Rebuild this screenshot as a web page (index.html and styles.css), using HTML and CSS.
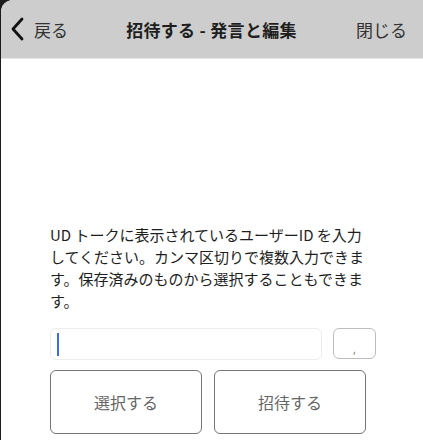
FILE: index.html
```html
<!DOCTYPE html>
<html lang="ja">
<head>
    <meta charset="UTF-8">
    <meta name="viewport" content="width=device-width, initial-scale=1.0">
    <title>招待する - 発言と編集</title>
    <link rel="stylesheet" href="styles.css">
</head>
<body>
    <div class="sheet">
        <div class="nav-bar">
            <a class="nav-back">
                <svg class="chevron" width="14" height="24" viewBox="0 0 14 24">
                    <polyline points="12,2 3,12 12,22" fill="none" stroke="#111" stroke-width="2.8" stroke-linecap="round" stroke-linejoin="round"/>
                </svg>
                <span>戻る</span>
            </a>
            <div class="nav-title">招待する - 発言と編集</div>
            <a class="nav-close">閉じる</a>
        </div>

        <div class="content">
            <p class="guide">UD トークに表示されているユーザーID を入力してください。カンマ区切りで複数入力できます。保存済みのものから選択することもできます。</p>

            <div class="input-row">
                <div class="id-input"><span class="caret"></span></div>
                <button class="comma-btn">,</button>
            </div>

            <div class="button-row">
                <button class="action-btn">選択する</button>
                <button class="action-btn">招待する</button>
            </div>
        </div>
    </div>
</body>
</html>
```

FILE: styles.css
```css
body {
    margin: 0;
    padding: 0;
    background: #1c1c1c;
    font-family: "Noto Sans CJK JP", "Noto Sans", sans-serif;
    color: #222;
}

.sheet {
    background: #fff;
    height: 440px;
    overflow: hidden;
    border-top-left-radius: 12px;
    margin-left: 1px;
}

.nav-bar {
    height: 58px;
    background: #cdcdcd;
    border-bottom: 1px solid #e6e6e6;
    display: flex;
    align-items: center;
    justify-content: space-between;
    padding: 0 16px 0 9px;
}

.nav-back {
    display: flex;
    align-items: center;
    gap: 10px;
    font-size: 17px;
    color: #333;
    width: 90px;
}

.nav-title {
    font-size: 17px;
    font-weight: bold;
    color: #1e1e1e;
    margin-left: 6px;
    letter-spacing: 0.3px;
}

.nav-close {
    font-size: 17px;
    color: #333;
    width: 90px;
    text-align: right;
}

.content {
    padding: 165px 0 0 49px;
}

.guide {
    width: 318px;
    margin: 0;
    font-size: 15px;
    line-height: 22px;
    color: #1e1e1e;
}

.input-row {
    display: flex;
    gap: 11px;
    margin-top: 16px;
}

.id-input {
    width: 264px;
    height: 30px;
    border: 1px solid #ececec;
    border-radius: 6px;
    display: flex;
    align-items: center;
    padding-left: 6px;
}

.caret {
    width: 2px;
    height: 23px;
    background: #3a6cf2;
}

.comma-btn {
    width: 43px;
    height: 31px;
    border: 1px solid #bdbdbd;
    border-radius: 6px;
    background: #fff;
    color: #999;
    font-size: 13px;
    padding: 8px 0 0 0;
    font-family: "Noto Sans", sans-serif;
}

.button-row {
    display: flex;
    gap: 12px;
    margin-top: 10px;
}

.action-btn {
    width: 152px;
    height: 64px;
    border: 1.5px solid #757575;
    border-radius: 6px;
    background: #fff;
    color: #666;
    font-size: 16px;
    font-family: "Noto Sans CJK JP", "Noto Sans", sans-serif;
}
```
